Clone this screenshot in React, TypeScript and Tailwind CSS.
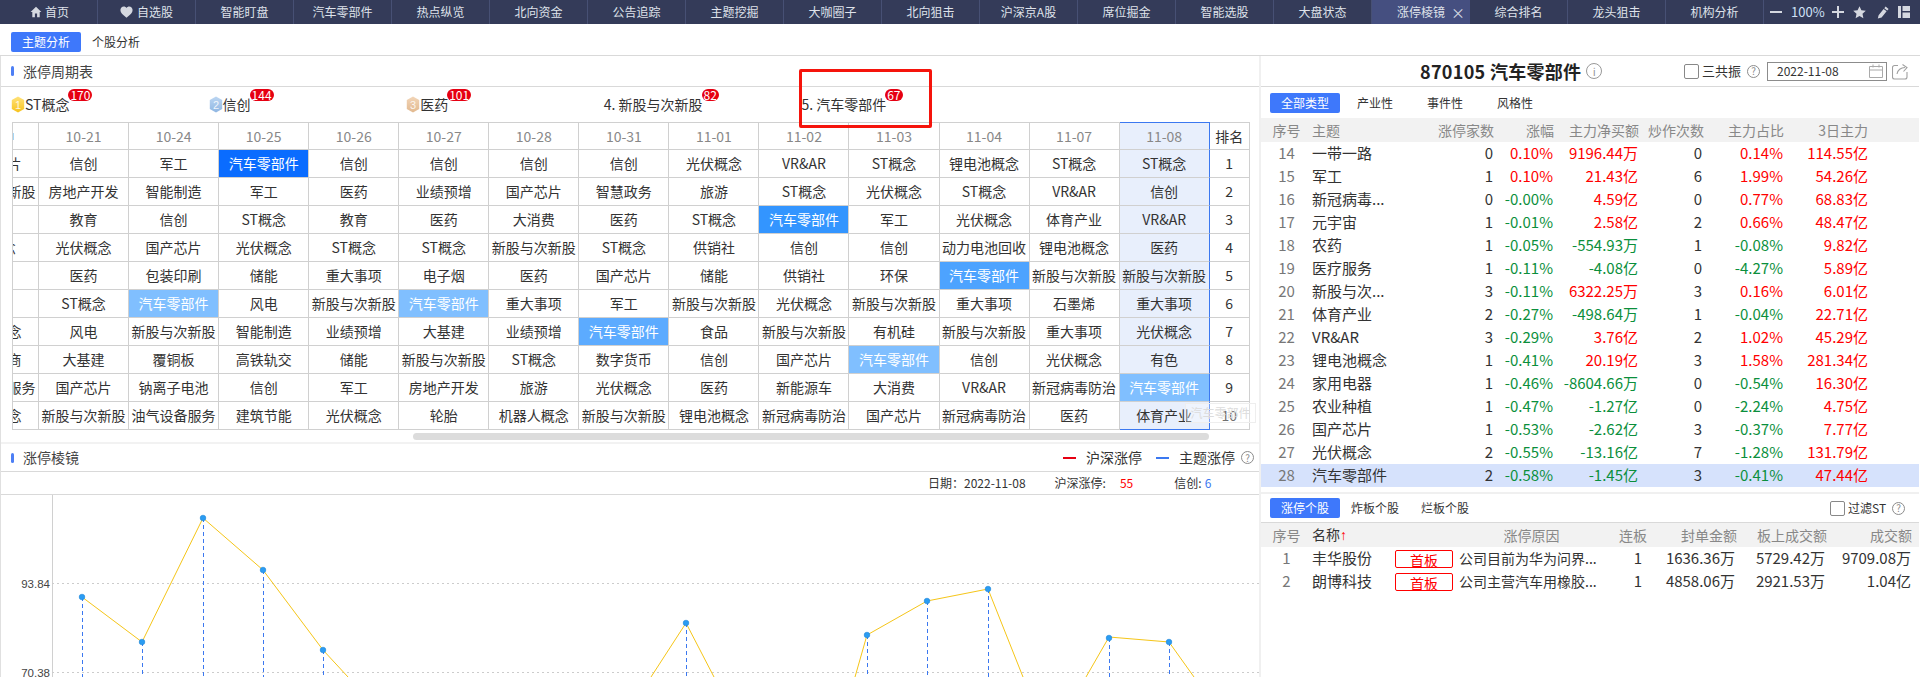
import React from "react";

const navTabs = ["智能盯盘", "汽车零部件", "热点纵览", "北向资金", "公告追踪", "主题挖掘", "大咖圈子", "北向狙击", "沪深京A股", "席位掘金", "智能选股", "大盘状态"];
const dates = ["10-20", "10-21", "10-24", "10-25", "10-26", "10-27", "10-28", "10-31", "11-01", "11-02", "11-03", "11-04", "11-07", "11-08"];

const rows = [
  ["国产芯片", "信创", "军工", "汽车零部件", "信创", "信创", "信创", "信创", "光伏概念", "VR&AR", "ST概念", "锂电池概念", "ST概念", "ST概念"],
  ["新股与次新股", "房地产开发", "智能制造", "军工", "医药", "业绩预增", "国产芯片", "智慧政务", "旅游", "ST概念", "光伏概念", "ST概念", "VR&AR", "信创"],
  ["军工", "教育", "信创", "ST概念", "教育", "医药", "大消费", "医药", "ST概念", "汽车零部件", "军工", "光伏概念", "体育产业", "VR&AR"],
  ["ST概念", "光伏概念", "国产芯片", "光伏概念", "ST概念", "ST概念", "新股与次新股", "ST概念", "供销社", "信创", "信创", "动力电池回收", "锂电池概念", "医药"],
  ["医药", "医药", "包装印刷", "储能", "重大事项", "电子烟", "医药", "国产芯片", "储能", "供销社", "环保", "汽车零部件", "新股与次新股", "新股与次新股"],
  ["信创", "ST概念", "汽车零部件", "风电", "新股与次新股", "汽车零部件", "重大事项", "军工", "新股与次新股", "光伏概念", "新股与次新股", "重大事项", "石墨烯", "重大事项"],
  ["光伏概念", "风电", "新股与次新股", "智能制造", "业绩预增", "大基建", "业绩预增", "汽车零部件", "食品", "新股与次新股", "有机硅", "新股与次新股", "重大事项", "光伏概念"],
  ["跨境电商", "大基建", "覆铜板", "高铁轨交", "储能", "新股与次新股", "ST概念", "数字货币", "信创", "国产芯片", "汽车零部件", "信创", "光伏概念", "有色"],
  ["油气设备服务", "国产芯片", "钠离子电池", "信创", "军工", "房地产开发", "旅游", "光伏概念", "医药", "新能源车", "大消费", "VR&AR", "新冠病毒防治", "汽车零部件"],
  ["光伏概念", "新股与次新股", "油气设备服务", "建筑节能", "光伏概念", "轮胎", "机器人概念", "新股与次新股", "锂电池概念", "新冠病毒防治", "国产芯片", "新冠病毒防治", "医药", "体育产业"],
];

const hlByRow = ["bg-[#0a6cff]", "", "bg-[#3395ff]", "", "bg-[#4da3ff]", "bg-[#80bfff]", "bg-[#5cabff]", "bg-[#80bfff]", "bg-[#80bfff]", ""];

const themes = [
  ["14", "一带一路", "0", "0.10%", "9196.44万", "0", "0.14%", "114.55亿"],
  ["15", "军工", "1", "0.10%", "21.43亿", "6", "1.99%", "54.26亿"],
  ["16", "新冠病毒...", "0", "-0.00%", "4.59亿", "0", "0.77%", "68.83亿"],
  ["17", "元宇宙", "1", "-0.01%", "2.58亿", "2", "0.66%", "48.47亿"],
  ["18", "农药", "1", "-0.05%", "-554.93万", "1", "-0.08%", "9.82亿"],
  ["19", "医疗服务", "1", "-0.11%", "-4.08亿", "0", "-4.27%", "5.89亿"],
  ["20", "新股与次...", "3", "-0.11%", "6322.25万", "3", "0.16%", "6.01亿"],
  ["21", "体育产业", "2", "-0.27%", "-498.64万", "1", "-0.04%", "22.71亿"],
  ["22", "VR&AR", "3", "-0.29%", "3.76亿", "2", "1.02%", "45.29亿"],
  ["23", "锂电池概念", "1", "-0.41%", "20.19亿", "3", "1.58%", "281.34亿"],
  ["24", "家用电器", "1", "-0.46%", "-8604.66万", "0", "-0.54%", "16.30亿"],
  ["25", "农业种植", "1", "-0.47%", "-1.27亿", "0", "-2.24%", "4.75亿"],
  ["26", "国产芯片", "1", "-0.53%", "-2.62亿", "3", "-0.37%", "7.77亿"],
  ["27", "光伏概念", "2", "-0.55%", "-13.16亿", "7", "-1.28%", "131.79亿"],
  ["28", "汽车零部件", "2", "-0.58%", "-1.45亿", "3", "-0.41%", "47.44亿"],
];

const points: [number, number][] = [[81, 597], [141, 642], [202, 518], [262, 570], [322, 650]];

function sign(v: string) {
  return v.startsWith("-") ? "text-[#0b8f3c]" : "text-[#ff0000]";
}

function Help({ className = "" }: { className?: string }) {
  return (
    <span className={"inline-flex h-[13px] w-[13px] shrink-0 items-center justify-center rounded-full border border-[#8c8c8c] text-[10px] leading-none text-[#8c8c8c] " + className}>?</span>
  );
}

function Hexagon({ n, from, to }: { n: number; from: string; to: string }) {
  const id = "hex" + n;
  return (
    <svg width="14" height="17" viewBox="0 0 14 17" className="shrink-0">
      <defs>
        <linearGradient id={id} x1="0" y1="0" x2="0" y2="1">
          <stop offset="0" stopColor={from} />
          <stop offset="1" stopColor={to} />
        </linearGradient>
      </defs>
      <path d="M7 .5l6.2 3.6v8.8L7 16.5.8 12.9V4.1z" fill={`url(#${id})`} />
      <text x="7" y="12.5" textAnchor="middle" fontSize="11" fill="#fff" fillOpacity="0.85" fontFamily="Liberation Sans, sans-serif">{n}</text>
    </svg>
  );
}

function RankItem({ label, count, icon }: { label: string; count: number; icon?: React.ReactNode }) {
  return (
    <div className="flex w-[197.6px] items-center text-[14px] text-[#333]">
      {icon}
      <span className="relative">
        {label}
        <span className="absolute -top-[5px] left-full -ml-px h-[12px] rounded-[6px] bg-[#e60012] px-[2px] text-[12px] leading-[12px] text-white">{count}</span>
      </span>
    </div>
  );
}

function SectionTitle({ children }: { children: React.ReactNode }) {
  return (
    <div className="flex items-center gap-[9px]">
      <span className="h-[10px] w-[3px] rounded-sm bg-[#4d7ff5]" />
      <span className="text-[14px] text-[#444]">{children}</span>
    </div>
  );
}

function CycleTable() {
  const cols = "grid grid-cols-[repeat(14,90.05px)_40px]";
  return (
    <div className="ml-[11px] w-[1238px] overflow-hidden border-l border-[#d0d0d0]">
      <div className="-ml-[64px] w-[1301px]">
        <div className={cols + " h-[28px] text-[14px] text-[#888]"}>
          {dates.map((d, i) =>
            i === 0 ? (
              <div key={d} className="flex items-center justify-end border-b border-r border-t border-[#d0d0d0] pr-[24px]">
                <span className="h-[7px] w-[2px] bg-[#a5d6f5]" />
              </div>
            ) : (
              <div key={d} className={"flex items-center justify-center border-b border-r border-t " + (i === 13 ? "border-[#3b78f0] border-b-[#d0d0d0] bg-[#e8effc]" : "border-[#d0d0d0]")}>
                {d}
              </div>
            )
          )}
          <div className="flex items-center justify-center border-b border-r border-t border-[#d0d0d0] text-[#333]">排名</div>
        </div>
        {rows.map((row, r) => (
          <div key={r} className={cols + " h-[28px] text-[14px] text-[#333]"}>
            {row.map((c, i) => {
              const hl = c === "汽车零部件";
              const last = i === 13;
              let cls = "border-[#d0d0d0]";
              if (last) cls = "border-[#d0d0d0] border-l-[#3b78f0] border-r-[#3b78f0] bg-[#e8effc]" + (r === 9 ? " border-b-[#3b78f0]" : "");
              if (hl) cls = cls.replace(" bg-[#e8effc]", "") + " text-white " + hlByRow[r];
              return (
                <div key={i} className={"flex items-center justify-center whitespace-nowrap border-b border-r " + cls}>{c}</div>
              );
            })}
            <div className="flex items-center justify-center border-b border-r border-[#d0d0d0]">{r + 1}</div>
          </div>
        ))}
      </div>
    </div>
  );
}

function Chart() {
  const line = "81,597 141,642 202,518 262,570 322,650 347,677";
  return (
    <div className="relative h-[182px]">
      <svg width="1258" height="182" viewBox="0 495 1258 182" className="block">
        <line x1="51.5" y1="495" x2="51.5" y2="677" stroke="#d0d0d0" />
        <line x1="51" y1="583.5" x2="1258" y2="583.5" stroke="#ccc" strokeDasharray="2 3" />
        <line x1="51" y1="672.5" x2="1258" y2="672.5" stroke="#ccc" strokeDasharray="2 3" />
        <text x="49" y="588" textAnchor="end" fontSize="11.5" fill="#444" fontFamily="Liberation Sans, sans-serif">93.84</text>
        <text x="49" y="677" textAnchor="end" fontSize="11.5" fill="#444" fontFamily="Liberation Sans, sans-serif">70.38</text>
        <g fill="none" stroke="#f5c518" strokeWidth="1">
          <polyline points={line} />
          <polyline points="650,677 685,623 713,677" />
          <polyline points="854,677 866,635 926,601 987,589 1022,677" />
          <polyline points="1085,677 1108,637 1168,642 1193,677" />
        </g>
        <g stroke="#3b78f0" strokeDasharray="4 3">
          {[...points, [685, 623], [866, 635], [926, 601], [987, 589], [1108, 638], [1168, 642]].map(([x, y]) => (
            <line key={x} x1={x + 0.5} y1={y} x2={x + 0.5} y2="677" />
          ))}
        </g>
        <g fill="#2b9cf2" stroke="#1f86d8" strokeWidth="0.6">
          {[...points, [685, 623], [866, 635], [926, 601], [987, 589], [1108, 638], [1168, 642]].map(([x, y]) => (
            <circle key={x} cx={x} cy={y} r="2.8" />
          ))}
        </g>
      </svg>
    </div>
  );
}

function ThemeTable() {
  const cols = "grid grid-cols-[51px_119px_63px_60px_85px_65px_80px_84px_44px] items-center";
  return (
    <div>
      <div className={cols + " h-[24px] bg-[#f2f2f2] text-[14px] text-[#888]"}>
        <div className="text-center">序号</div>
        <div>主题</div>
        <div className="text-right">涨停家数</div>
        <div className="text-right">涨幅</div>
        <div className="text-right">主力净买额</div>
        <div className="text-right">炒作次数</div>
        <div className="text-right">主力占比</div>
        <div className="text-right">3日主力</div>
      </div>
      {themes.map((t) => (
        <div key={t[0]} className={cols + " h-[23px] whitespace-nowrap text-[15px] text-[#333]" + (t[0] === "28" ? " bg-[#d6e2fc]" : "")}>
          <div className="text-center text-[#777]">{t[0]}</div>
          <div>{t[1]}</div>
          <div className="pr-px text-right">{t[2]}</div>
          <div className={"pr-px text-right " + sign(t[3])}>{t[3]}</div>
          <div className={"pr-px text-right " + sign(t[4])}>{t[4]}</div>
          <div className="pr-[2px] text-right">{t[5]}</div>
          <div className={"pr-px text-right " + sign(t[6])}>{t[6]}</div>
          <div className={"text-right " + sign(t[7])}>{t[7]}</div>
        </div>
      ))}
    </div>
  );
}

function StockTable() {
  const cols = "grid grid-cols-[51px_83px_64px_135px_53px_90px_90px_85px] items-center";
  const stocks = [
    ["1", "丰华股份", "公司目前为华为问界...", "1", "1636.36万", "5729.42万", "9709.08万"],
    ["2", "朗博科技", "公司主营汽车用橡胶...", "1", "4858.06万", "2921.53万", "1.04亿"],
  ];
  return (
    <div>
      <div className={cols + " h-[24px] whitespace-nowrap bg-[#f2f2f2] text-[14px] text-[#888]"}>
        <div className="text-center">序号</div>
        <div className="text-[#333]">名称<span className="font-['Liberation_Sans',sans-serif] text-[14px] text-[#ff0000]">↑</span></div>
        <div />
        <div className="pl-[10px] text-center">涨停原因</div>
        <div className="text-right">连板</div>
        <div className="text-right">封单金额</div>
        <div className="text-right">板上成交额</div>
        <div className="text-right">成交额</div>
      </div>
      {stocks.map((s) => (
        <div key={s[0]} className={cols + " h-[23px] whitespace-nowrap text-[15px] text-[#333]"}>
          <div className="text-center text-[#777]">{s[0]}</div>
          <div>{s[1]}</div>
          <div>
            <div className="flex h-[18px] w-[58px] items-center justify-center rounded-[2px] border border-[#ff0000] pt-[2px] text-[14px] leading-none text-[#ff0000]">首板</div>
          </div>
          <div className="text-[14px]">{s[2]}</div>
          <div className="pr-[5px] text-right">{s[3]}</div>
          <div className="pr-[2px] text-right">{s[4]}</div>
          <div className="pr-[2px] text-right">{s[5]}</div>
          <div className="pr-px text-right">{s[6]}</div>
        </div>
      ))}
    </div>
  );
}

export default function App() {
  return (
    <div className="relative h-[677px] w-[1920px] overflow-hidden bg-white font-['Noto_Sans_CJK_SC',sans-serif]">
      {/* top tabs */}
      <div className="flex h-[24px] bg-[#343b59] text-[12px] text-[#dfe2ea]">
        <div className="flex w-[98px] items-center justify-center gap-[3px] border-r border-[#475074] pl-[2px]">
          <svg width="12" height="12" viewBox="0 0 12 12" fill="#d5d8e0"><path d="M6 .8L.6 6h1.7v5.2h2.6V7.6h2.2v3.6h2.6V6h1.7z" /></svg>
          首页
        </div>
        <div className="flex w-[98px] items-center justify-center gap-[4px] border-r border-[#475074]">
          <svg width="13" height="12" viewBox="0 0 13 12" fill="#d5d8e0"><path d="M6.5 11.8C2.5 8.8.4 6.7.4 4.1.4 2 2 .5 3.8.5c1.1 0 2.1.5 2.7 1.5C7.1 1 8.1.5 9.2.5c1.8 0 3.4 1.500 3.4 3.600 0 2.600-2.100 4.700-6.100 7.700z" /></svg>
          自选股
        </div>
        {navTabs.map((t) => (
          <div key={t} className="flex w-[98px] items-center justify-center border-r border-[#475074]">{t}</div>
        ))}
        <div className="relative flex w-[98px] items-center justify-center bg-[#454f80]">
          涨停棱镜
          <span className="absolute right-[5px] text-[14px] text-[#d5d8e0]">×</span>
        </div>
        {["综合排名", "龙头狙击", "机构分析"].map((t) => (
          <div key={t} className="flex w-[98px] items-center justify-center border-r border-[#475074]">{t}</div>
        ))}
        <div className="flex flex-1 items-center pl-[6px]">
          <span className="h-[2px] w-[12px] bg-[#d5d8e0]" />
          <span className="ml-[9px] w-[32px] text-[13px] text-[#cfe0f5]">100%</span>
          <svg width="12" height="12" viewBox="0 0 12 12" className="ml-[9px]" fill="#d5d8e0"><path d="M5 0h2v5h5v2H7v5H5V7H0V5h5z" /></svg>
          <svg width="13" height="13" viewBox="0 0 13 13" className="ml-[9px]" fill="#d5d8e0"><path d="M6.500.3l1.900 4 4.400.5-3.300 3 .9 4.400-3.900-2.200-3.900 2.200.9-4.400-3.300-3 4.400-.5z" /></svg>
          <svg width="12" height="13" viewBox="0 0 12 13" className="ml-[11px]" fill="#d5d8e0"><path d="M8.600.6l3 2.300-1.300 1.700-3-2.300zM6.600 3l3 2.300-5 6.300-3.800 1 .8-3.300z" /></svg>
          <svg width="12" height="12" viewBox="0 0 12 12" className="ml-[9px]" fill="#d5d8e0"><path d="M0 0h3v12H0zM4.500 0H12v5H4.500zM4.500 6.500H12V12H4.500z" /></svg>
        </div>
      </div>

      {/* sub tabs */}
      <div className="mt-[1px] flex h-[31px] items-center border-b border-[#d9d9d9] pl-[11px] pt-[4px] text-[12px]">
        <div className="flex h-[20px] w-[70px] items-center justify-center rounded-[2px] bg-[#3e78fb] text-white">主题分析</div>
        <div className="ml-[11px] text-[#333]">个股分析</div>
      </div>

      <div className="flex">
        {/* left */}
        <div className="w-[1259px] shrink-0 border-l border-[#e0e0e0]">
          <div className="flex h-[31px] items-center border-b border-[#d9d9d9] pl-[10px]">
            <SectionTitle>涨停周期表</SectionTitle>
          </div>
          <div className="flex h-[35px] items-center pl-[10px]">
            <RankItem label="ST概念" count={170} icon={<Hexagon n={1} from="#ffe27a" to="#f7c21c" />} />
            <RankItem label="信创" count={144} icon={<Hexagon n={2} from="#bcd6f2" to="#8fb6e2" />} />
            <RankItem label="医药" count={101} icon={<Hexagon n={3} from="#f2d5b8" to="#e2b98f" />} />
            <RankItem label="4. 新股与次新股" count={82} />
            <RankItem label="5. 汽车零部件" count={67} />
          </div>
          <CycleTable />
          <div className="flex h-[12px] items-center">
            <div className="ml-[412px] mt-[1px] h-[7px] w-[796px] rounded-[4px] bg-[#dcdcdc]" />
          </div>
          <div className="h-[2px] bg-[#f2f2f2]" />
          <div className="flex h-[28px] items-center border-b border-[#d9d9d9] pl-[10px]">
            <SectionTitle>涨停棱镜</SectionTitle>
            <div className="ml-auto flex items-center pr-[5px] text-[14px] text-[#333]">
              <span className="h-[2px] w-[13px] bg-[#e60012]" />
              <span className="ml-[10px]">沪深涨停</span>
              <span className="ml-[14px] h-[2px] w-[13px] bg-[#3b78f0]" />
              <span className="ml-[10px]">主题涨停</span>
              <Help className="ml-[6px]" />
            </div>
          </div>
          <div className="flex h-[23px] items-center border-b border-[#d9d9d9] pl-[927px] text-[12px] text-[#333]">
            <span>日期：2022-11-08</span>
            <span className="ml-[29px]">沪深涨停:</span>
            <span className="ml-[14px] text-[#ff0000]">55</span>
            <span className="ml-[41px]">信创:</span>
            <span className="ml-[3px] text-[#3b78f0]">6</span>
          </div>
          <Chart />
        </div>

        {/* right */}
        <div className="w-[660px] shrink-0 border-l-2 border-[#f0f0f0]">
          <div className="flex h-[31px] items-center border-b border-[#d9d9d9]">
            <div className="ml-[159px] flex w-[250px] items-center gap-[5px] text-[18px] font-bold leading-none tracking-[0.3px] text-[#222]">
              870105 汽车零部件
              <span className="flex h-[16px] w-[16px] items-center justify-center rounded-full border border-[#999] text-[11px] font-normal text-[#999]">i</span>
            </div>
            <span className="ml-[14px] h-[15px] w-[15px] rounded-[2px] border border-[#888]" />
            <span className="ml-[3px] text-[13px] text-[#333]">三共振</span>
            <Help className="ml-[6px]" />
            <div className="ml-[7px] flex h-[19px] w-[120px] items-center justify-between border border-[#8c8c8c] px-[9px] pr-[3px] text-[12px] text-[#333]">
              2022-11-08
              <svg width="14" height="14" viewBox="0 0 14 14" fill="none" stroke="#aaa"><path d="M.5 2.500h13v11H.5zM.5 6h13M4 .5v3M10 .5v3" /></svg>
            </div>
            <svg width="16" height="17" viewBox="0 0 16 17" fill="none" stroke="#a0a0a0" strokeWidth="1.1" className="ml-[5px]">
              <path d="M6 2.500H2.500a2 2 0 0 0-2 2V14a2 2 0 0 0 2 2H13a2 2 0 0 0 2-2V9" />
              <path d="M5 11c.5-4 4-6.500 8-6.500M10.500 1.500l4.500 3-3.500 4" />
            </svg>
          </div>
          <div className="flex h-[31px] items-center pl-[9px] text-[12px] text-[#333]">
            <div className="flex h-[20px] w-[70px] items-center justify-center rounded-[2px] bg-[#3e78fb] text-white">全部类型</div>
            <span className="ml-[17px]">产业性</span>
            <span className="ml-[34px]">事件性</span>
            <span className="ml-[34px]">风格性</span>
          </div>
          <ThemeTable />
          <div className="mt-[5px] h-[2px] bg-[#f0f0f0]" />
          <div className="flex h-[29px] items-center border-b border-[#d9d9d9] pl-[9px] text-[12px] text-[#333]">
            <div className="flex h-[20px] w-[70px] items-center justify-center rounded-[2px] bg-[#3e78fb] text-white">涨停个股</div>
            <span className="ml-[11px]">炸板个股</span>
            <span className="ml-[22px]">烂板个股</span>
            <span className="ml-[361px] h-[15px] w-[15px] rounded-[2px] border border-[#888]" />
            <span className="ml-[3px]">过滤ST</span>
            <Help className="ml-[6px]" />
          </div>
          <StockTable />
        </div>
      </div>

      {/* drag ghost */}
      <div className="absolute left-[1185px] top-[403px] flex h-[20px] w-[71px] items-center justify-center border border-[#eeeeee] bg-white/30 text-[12px] text-[#dcdcdc]">汽车零部件</div>
      {/* annotation */}
      <div className="absolute left-[799px] top-[69px] h-[59px] w-[133px] rounded-[2px] border-[3px] border-[#f5140c]" />
    </div>
  );
}
